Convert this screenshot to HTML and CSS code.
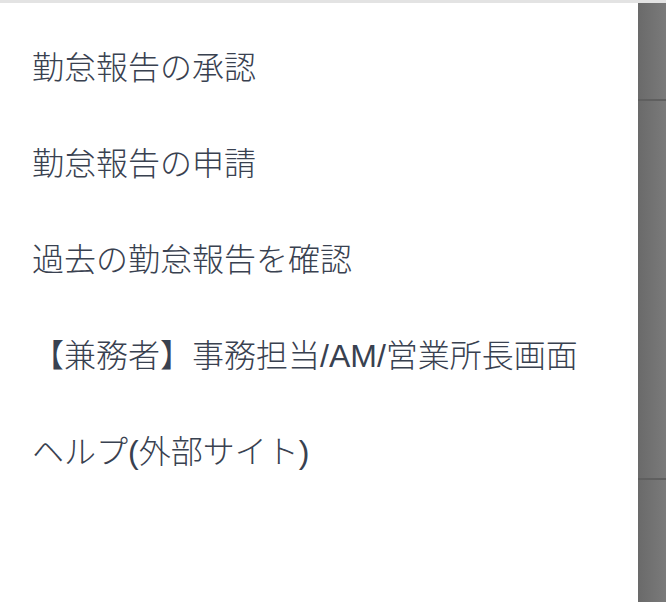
FILE: index.html
```html
<!DOCTYPE html>
<html lang="ja">
<head>
<meta charset="utf-8">
<title>Menu</title>
<link rel="stylesheet" href="styles.css">
</head>
<body>
<div class="topbar"></div>
<div class="layout">
  <nav class="drawer">
    <a class="item">勤怠報告の承認</a>
    <a class="item">勤怠報告の申請</a>
    <a class="item">過去の勤怠報告を確認</a>
    <a class="item">【兼務者】事務担当/AM/営業所長画面</a>
    <a class="item">ヘルプ(外部サイト)</a>
  </nav>
  <div class="overlay">
    <div class="ov-head"></div>
    <div class="ov-body"></div>
    <div class="ov-foot"></div>
  </div>
</div>
</body>
</html>
```

FILE: styles.css
```css
html, body {
  margin: 0;
  padding: 0;
  height: 100%;
  background: #ffffff;
}
body {
  font-family: "Liberation Sans", "Noto Sans CJK JP", sans-serif;
  color: #394150;
  overflow: hidden;
}
.topbar {
  height: 3px;
  background: #e3e3e3;
}
.layout {
  display: flex;
  height: 599px;
}
.drawer {
  width: 638px;
  flex: none;
  padding-top: 17px;
  display: flex;
  flex-direction: column;
  background: #ffffff;
}
.item {
  height: 96px;
  display: flex;
  align-items: center;
  padding-left: 32px;
  font-size: 32px;
  font-weight: 300;
  line-height: 40px;
  white-space: nowrap;
  color: #394150;
  text-decoration: none;
}
.overlay {
  flex: 1;
  display: flex;
  flex-direction: column;
  background: linear-gradient(to right, #6a6a6a, #7a7a7a);
}
.ov-head {
  height: 96px;
  border-bottom: 2px solid #5f5f5f;
}
.ov-body {
  height: 377px;
  border-bottom: 2px solid #5f5f5f;
}
.ov-foot {
  flex: 1;
}
```
